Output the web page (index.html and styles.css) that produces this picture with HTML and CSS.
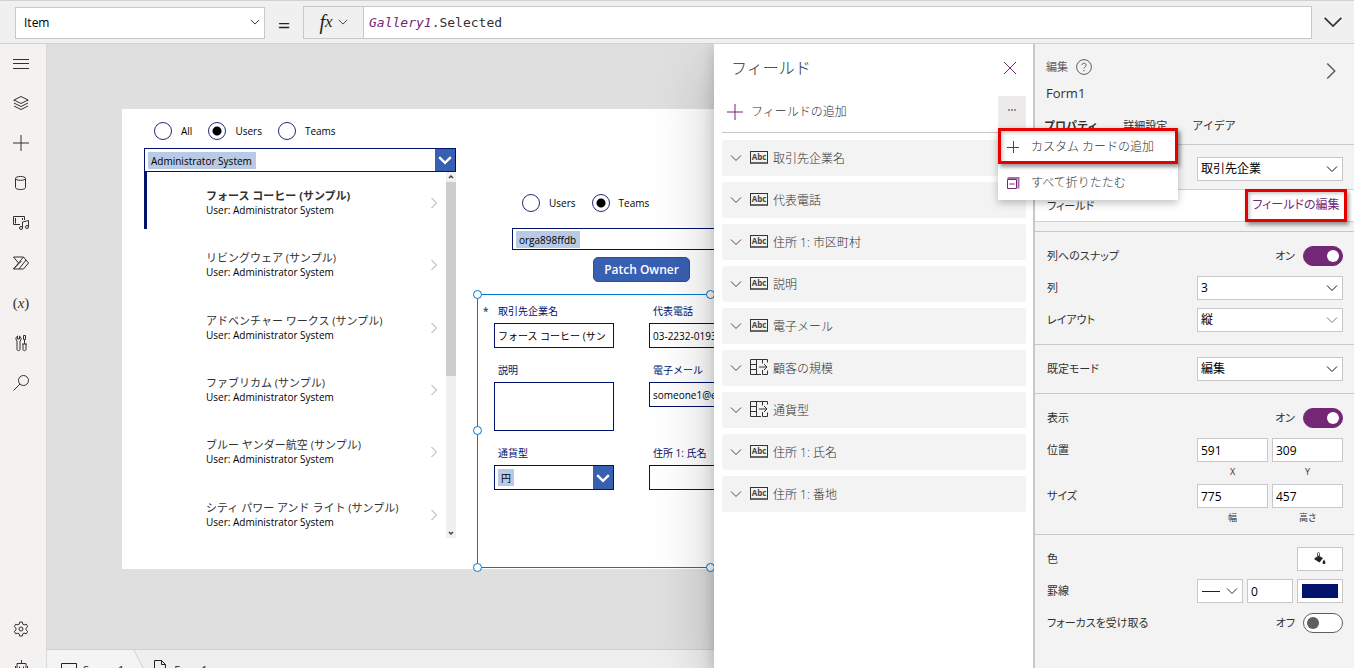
FILE: index.html
```html
<!DOCTYPE html>
<html lang="ja">
<head>
<meta charset="utf-8">
<title>Form1</title>
<link rel="stylesheet" href="styles.css">
</head>
<body>
<svg class="defs" aria-hidden="true">
  <symbol id="down" viewBox="0 0 12 12"><path d="M1 3.5 6 8.5 11 3.5"/></symbol>
  <symbol id="right" viewBox="0 0 12 12"><path d="M3.5 1 8.5 6 3.5 11"/></symbol>
  <symbol id="plus" viewBox="0 0 16 16"><path d="M8 0v16M0 8h16"/></symbol>
  <symbol id="lookup" viewBox="0 0 18 16"><path d="M11 15.500H.5V.5h17v3M6.500.5v15M.5 5.500h6M.5 10.500h6M12.500.5v4M12.500 11v4.500h5v-4M9 8h8M14 5l3 3-3 3"/></symbol>
</svg>

<header class="formula">
  <span class="pick pick-prop"><select aria-label="プロパティ名"><option>Item</option></select><svg class="ico s10"><use href="#down"/></svg></span>
  <span class="equals">=</span>
  <div class="fbox">
    <button class="fx" aria-label="fx"><i>f</i><em>x</em><svg class="ico s10"><use href="#down"/></svg></button>
    <code class="code"><span class="ident">Gallery1</span>.Selected</code>
  </div>
  <button class="expand" aria-label="展開"><svg class="ico" width="20" height="20"><use href="#down"/></svg></button>
</header>

<div class="main">
  <nav class="rail">
    <button aria-label="メニュー"><svg class="ico s16" viewBox="0 0 16 16"><path d="M0 3.500h16M0 7.500h16M0 12.500h16"/></svg></button>
    <button aria-label="ツリー ビュー"><svg class="ico s16" viewBox="0 0 16 16"><path d="M8 1.500 15 5 8 8.500 1 5zM1 8l7 3.500L15 8M1 11l7 3.500L15 11M1 5v1M15 5v1"/></svg></button>
    <button aria-label="挿入"><svg class="ico s16"><use href="#plus"/></svg></button>
    <button aria-label="データ"><svg class="ico s16" viewBox="0 0 16 16"><path d="M2.500 3.500v9c0 2.700 10 2.700 10 0v-9c0-2.700-10-2.700-10 0c0 2.400 10 2.400 10 0"/></svg></button>
    <button aria-label="メディア"><svg class="ico s16" viewBox="0 0 16 16"><path d="M7 9.500H.5v-8h11V5M2.500 3v5.500M9.500 3v2"/><path d="M9.500 13V7l6-1.500V12"/><circle cx="8" cy="13" r="1.500"/><circle cx="14" cy="12" r="1.500"/></svg></button>
    <button aria-label="Power Automate"><svg class="ico s16" viewBox="0 0 16 16"><path d="M.5 2h10l5 6-5 6H.5l5-6zM5.500 8l5-6M6 14l7-9M.5 14l8-8"/></svg></button>
    <button aria-label="変数"><span class="var">(<i>x</i>)</span></button>
    <button aria-label="ツール"><svg class="ico s16" viewBox="0 0 16 16"><path d="M4.500 1v3h2V1c2 1 2 4 .5 5v8.500c0 1.500-3 1.500-3 0V6C2.500 5 2.500 2 4.500 1zM10.500.5h2v4h-2zM11.500 4.500V9M9 9h5M10 9v5.500c0 1.500 3 1.500 3 0V9"/></svg></button>
    <button aria-label="検索"><svg class="ico s16" viewBox="0 0 16 16"><circle cx="10.500" cy="5.500" r="5"/><path d="M7 9 .5 15.500"/></svg></button>
    <div class="rail-end">
      <button aria-label="設定"><svg class="ico s16" viewBox="0 0 16 16"><circle cx="8" cy="8" r="2"/><path d="M6.700 1h2.600l.5 2.200 1.300.7 2.200-.7 1.400 2.400L13 7.200v1.600l1.700 1.600-1.400 2.400-2.200-.7-1.300.7-.5 2.200H6.700l-.5-2.200-1.300-.7-2.200.7-1.400-2.400L3 8.800V7.200L1.300 5.600l1.400-2.400 2.200.7 1.300-.7z"/></svg></button>
      <button aria-label="仮想エージェント"><svg class="ico s16" viewBox="0 0 16 16"><path d="M8.500-1v3.500M4 2.500h9v9H4zM2.500 5v4M14.500 5v4M6.500 5.500v1.500M10.500 5.500v1.500"/></svg></button>
    </div>
  </nav>

  <main class="work">
    <div class="stage">
      <div class="page">
        <div class="radios at-filter">
          <label><input type="radio" name="filter">All</label>
          <label><input type="radio" name="filter" checked>Users</label>
          <label><input type="radio" name="filter">Teams</label>
        </div>
        <div class="combo at-user"><span class="chip">Administrator System</span><button aria-label="開く"><svg class="ico s14"><use href="#down"/></svg></button></div>
        <div class="gallery">
          <ul class="items">
            <li class="on"><div><b>フォース コーヒー (サンプル)</b><span>User: Administrator System</span></div><button aria-label="選択"><svg class="ico s12"><use href="#right"/></svg></button></li>
            <li><div><b>リビングウェア (サンプル)</b><span>User: Administrator System</span></div><button aria-label="選択"><svg class="ico s12"><use href="#right"/></svg></button></li>
            <li><div><b>アドベンチャー ワークス (サンプル)</b><span>User: Administrator System</span></div><button aria-label="選択"><svg class="ico s12"><use href="#right"/></svg></button></li>
            <li><div><b>ファブリカム (サンプル)</b><span>User: Administrator System</span></div><button aria-label="選択"><svg class="ico s12"><use href="#right"/></svg></button></li>
            <li><div><b>ブルー ヤンダー航空 (サンプル)</b><span>User: Administrator System</span></div><button aria-label="選択"><svg class="ico s12"><use href="#right"/></svg></button></li>
            <li><div><b>シティ パワー アンド ライト (サンプル)</b><span>User: Administrator System</span></div><button aria-label="選択"><svg class="ico s12"><use href="#right"/></svg></button></li>
          </ul>
          <div class="scroll">
            <svg width="10" height="10" viewBox="0 0 10 10"><path d="M3 6l2-2 2 2" fill="none" stroke="#444" stroke-width="1.500"/></svg>
            <div class="thumb"></div>
            <svg width="10" height="10" viewBox="0 0 10 10"><path d="M3 4l2 2 2-2" fill="none" stroke="#444" stroke-width="1.500"/></svg>
          </div>
        </div>

        <div class="radios at-owner">
          <label><input type="radio" name="owner">Users</label>
          <label><input type="radio" name="owner" checked>Teams</label>
        </div>
        <div class="combo at-team"><span class="chip">orga898ffdb</span></div>
        <button class="patch">Patch Owner</button>

        <form class="form">
          <div class="card req"><label for="c1">取引先企業名</label><input id="c1" value="フォース コーヒー (サン"></div>
          <div class="card"><label for="c2">代表電話</label><input id="c2" value="03-2232-0193"></div>
          <div class="card third"></div>
          <div class="card"><label for="c3">説明</label><textarea id="c3"></textarea></div>
          <div class="card"><label for="c4">電子メール</label><input id="c4" value="someone1@example.com"></div>
          <div class="card third"></div>
          <div class="card"><label for="c6">通貨型</label><div class="combo"><span class="chip">円</span><button id="c6" type="button"><svg class="ico s14"><use href="#down"/></svg></button></div></div>
          <div class="card"><label for="c5">住所 1: 氏名</label><input id="c5"></div>
          <i class="grip nw"></i><i class="grip n"></i><i class="grip w"></i><i class="grip sw"></i><i class="grip s"></i>
        </form>
      </div>
    </div>
    <div class="crumbs">
      <a href="#" class="crumb"><svg class="ico s16" viewBox="0 0 16 16"><path d="M.5 3.500h15v10H.5z"/></svg>Screen1</a>
      <svg class="slash" viewBox="0 0 20 36"><path d="M0 0h2l18 36H0z" fill="#f4f4f4"/><path d="M2 0l18 36" stroke="#d0d0d0" fill="none"/></svg>
      <a href="#" class="crumb last"><svg class="ico s16" viewBox="0 0 16 16"><path d="M2.500.5h7l4 4v11h-11zM9.500.5v4h4"/></svg>Form1</a>
    </div>
  </main>

  <aside class="fields">
    <div class="fields-head"><h2>フィールド</h2><button aria-label="閉じる"><svg class="ico s12" viewBox="0 0 12 12"><path d="M0 0l12 12M12 0 0 12"/></svg></button></div>
    <div class="fields-tools">
      <button class="add"><svg class="ico s16"><use href="#plus"/></svg>フィールドの追加</button>
      <div class="more">
        <button class="dots" aria-label="その他"><svg width="8" height="2" viewBox="0 0 8 2"><path d="M0 0h2v2H0zM3 0h2v2H3zM6 0h2v2H6z" fill="#a58aa5"/></svg></button>
        <div class="menu">
          <button class="marked"><svg class="ico s12" viewBox="0 0 12 12"><path d="M6.500 0v12M0 6.500h12"/></svg>カスタム カードの追加</button>
          <button><svg class="ico s12" viewBox="0 0 12 12"><path d="M.5 2.500h9v9h-9z"/><path d="M.5 1h11v10.500" stroke="#a56fa5" stroke-width="2"/><path d="M2.500 7h5"/></svg>すべて折りたたむ</button>
        </div>
      </div>
    </div>
    <ul class="list">
      <li><svg class="ico s12"><use href="#down"/></svg><span class="abc">Abc</span>取引先企業名</li>
      <li><svg class="ico s12"><use href="#down"/></svg><span class="abc">Abc</span>代表電話</li>
      <li><svg class="ico s12"><use href="#down"/></svg><span class="abc">Abc</span>住所 1: 市区町村</li>
      <li><svg class="ico s12"><use href="#down"/></svg><span class="abc">Abc</span>説明</li>
      <li><svg class="ico s12"><use href="#down"/></svg><span class="abc">Abc</span>電子メール</li>
      <li><svg class="ico s12"><use href="#down"/></svg><svg class="lookup"><use href="#lookup"/></svg>顧客の規模</li>
      <li><svg class="ico s12"><use href="#down"/></svg><svg class="lookup"><use href="#lookup"/></svg>通貨型</li>
      <li><svg class="ico s12"><use href="#down"/></svg><span class="abc">Abc</span>住所 1: 氏名</li>
      <li><svg class="ico s12"><use href="#down"/></svg><span class="abc">Abc</span>住所 1: 番地</li>
    </ul>
  </aside>

  <aside class="props">
    <div class="props-head">
      <div class="kind">編集<svg class="ico s16" viewBox="0 0 16 16"><circle cx="8" cy="8" r="7.400"/><path d="M5.900 6.200c0-2.700 4.200-2.700 4.200 0 0 1.700-2.100 1.600-2.100 3.300M8 11v1.300"/></svg></div>
      <button class="collapse" aria-label="折りたたむ"><svg class="ico" width="18" height="18"><use href="#right"/></svg></button>
      <h3>Form1</h3>
    </div>
    <div class="tabs"><button class="active">プロパティ</button><button>詳細設定</button><button>アイデア</button></div>

    <section>
      <div class="row"><span></span><span class="pick wide"><select aria-label="データ ソース"><option>取引先企業</option></select><svg class="ico s12"><use href="#down"/></svg></span></div>
      <div class="row lit"><span>フィールド</span><a href="#" class="edit">フィールドの編集</a></div>
    </section>
    <section>
      <div class="row"><label for="snap">列へのスナップ</label><span class="state">オン</span><input id="snap" type="checkbox" class="toggle" checked></div>
      <div class="row"><label for="cols">列</label><span class="pick wide"><select id="cols"><option>3</option></select><svg class="ico s12"><use href="#down"/></svg></span></div>
      <div class="row"><label for="lay">レイアウト</label><span class="pick wide soft"><select id="lay"><option>縦</option></select><svg class="ico s12"><use href="#down"/></svg></span></div>
    </section>
    <section>
      <div class="row"><label for="mode">既定モード</label><span class="pick wide"><select id="mode"><option>編集</option></select><svg class="ico s12"><use href="#down"/></svg></span></div>
    </section>
    <section>
      <div class="row"><label for="vis">表示</label><span class="state">オン</span><input id="vis" type="checkbox" class="toggle" checked></div>
      <div class="row"><span>位置</span><div class="pair"><input id="px" value="591"><input id="py" value="309"></div></div>
      <div class="caps"><label for="px">X</label><label for="py">Y</label></div>
      <div class="row"><span>サイズ</span><div class="pair"><input id="sw" value="775"><input id="sh" value="457"></div></div>
      <div class="caps"><label for="sw">幅</label><label for="sh">高さ</label></div>
    </section>
    <section class="end">
      <div class="row"><span>色</span><button class="tile" aria-label="塗りつぶしの色"><svg width="14" height="14" viewBox="0 0 14 14"><path d="M1 7l4-3.500 5 2.500-3.500 4.500z" fill="#222"/><path d="M4.500 6V1.500c0-1.300 2-1.300 2 0V5" fill="none" stroke="#555"/><path d="M11 7.500c2 3 2 4.500 0 4.500s-2-1.500 0-4.500z" fill="#222"/></svg></button></div>
      <div class="row"><span>罫線</span><div class="trio"><button class="tile line" aria-label="線の種類"><i></i><svg class="ico s12"><use href="#down"/></svg></button><input aria-label="罫線の太さ" value="0"><button class="tile" aria-label="罫線の色"><i class="navy"></i></button></div></div>
      <div class="row"><label for="foc">フォーカスを受け取る</label><span class="state">オフ</span><input id="foc" type="checkbox" class="toggle"></div>
    </section>
  </aside>
</div>
</body>
</html>
```
FILE: styles.css
```css
* { box-sizing: border-box; }
body {
  margin: 0;
  height: 100vh;
  display: flex;
  flex-direction: column;
  overflow: hidden;
  font: 12px/16px "Open Sans", "Noto Sans CJK JP", sans-serif;
  color: #323130;
}
button, input, select, textarea { font: inherit; color: inherit; margin: 0; border-radius: 0; }
button { background: none; border: 0; padding: 0; display: flex; align-items: center; justify-content: center; }
input, textarea { min-width: 0; }
ul { list-style: none; margin: 0; padding: 0; }
h2, h3 { margin: 0; font-weight: 400; }
a { text-decoration: none; color: inherit; }
.defs { position: absolute; width: 0; height: 0; }
.ico { fill: none; stroke: currentColor; stroke-width: 1; flex: none; overflow: visible; }
.s10 { width: 10px; height: 10px; }
.s12 { width: 12px; height: 12px; }
.s14 { width: 14px; height: 14px; }
.s16 { width: 16px; height: 16px; }

/* formula bar */
.formula {
  position: relative;
  flex: none;
  height: 44px;
  display: flex;
  align-items: center;
  padding-left: 15px;
  background: #f0f0f0;
  border-top: 1px solid #d2d2d2;
  border-bottom: 1px solid #d2d0ce;
  z-index: 2;
}
.pick { position: relative; display: flex; }
.pick select {
  appearance: none;
  width: 100%;
  padding: 0 20px 0 3px;
  background: #fff;
  border: 1px solid #c8c8c8;
  color: #000;
}
.pick .ico { position: absolute; right: 5px; top: 50%; margin-top: -6px; pointer-events: none; color: #111; }
.pick-prop { width: 250px; height: 32px; margin-top: 2px; }
.pick-prop select { padding-left: 8px; font-size: 12px; }
.equals { width: 38px; padding-top: 4px; text-align: center; font-size: 22px; font-weight: 500; color: #222; }
.fbox { flex: 1; display: flex; height: 33px; border: 1px solid #c8c8c8; background: #fff; }
.fx { width: 60px; background: #f0f0f0; border-right: 1px solid #c8c8c8; font: italic 20px/24px "Liberation Serif", serif; color: #222; }
.fx em { font-size: 17px; margin-right: 5px; }
.code { padding: 7px 5px; font: 13px/17px "DejaVu Sans Mono", monospace; color: #323130; }
.ident { color: #742774; font-style: italic; }
.expand { width: 42px; }

.main { flex: 1; min-height: 0; display: grid; grid-template-columns: 47px minmax(0, 1fr) 319px 321px; }

/* left rail */
.rail { display: flex; flex-direction: column; background: #f3f2f1; border-right: 1px solid #d8d8d8; overflow: hidden; padding-right: 4px; }
.rail button { width: 100%; height: 40px; flex: none; }
.rail > button:first-child { height: 39px; }
.rail-end { margin-top: auto; margin-bottom: -21px; }
.var { font: 15px/16px "Liberation Serif", serif; }

/* canvas */
.work { display: flex; flex-direction: column; overflow: hidden; background: #dfdfdf; }
.stage { flex: 1; min-height: 0; display: flex; padding: 65px 0 80px 75px; }
.page { position: relative; flex: 1; background: #fff; font-size: 10px; color: #000; }
.radios { position: absolute; display: flex; gap: 16px; }
.radios label { display: flex; align-items: center; gap: 9px; height: 19px; font-weight: 500; }
.radios input { appearance: none; width: 18px; height: 18px; border: 1px solid #1f2a7c; border-radius: 50%; background: #fff; }
.radios input:checked { background: radial-gradient(circle, #000 4px, #fff 5px); }
.at-filter { left: 32px; top: 12px; }
.at-owner { left: 400px; top: 84px; }
.combo { display: flex; height: 24px; border: 1px solid #00126b; background: #fff; align-items: center; padding-left: 3px; }
.combo .chip { background: #b8cae6; padding: 1px 3px 0; }
.at-user .chip, .at-team .chip { font-weight: 500; padding-right: 4px; }
.combo button { margin-left: auto; width: 20px; height: 100%; background: #3860b2; color: #fff; }
.combo .ico { stroke-width: 2; }
.at-user { position: absolute; left: 22px; top: 39px; width: 312px; }
.at-team { position: absolute; left: 390px; top: 119px; width: 325px; height: 22px; }
.gallery { position: absolute; left: 22px; top: 63px; width: 312px; height: 366px; display: flex; overflow: hidden; }
.items { flex: 1; height: 374px; display: grid; grid-auto-rows: 1fr; }
.items li { display: flex; align-items: flex-start; padding: 16px 6px 0 62px; }
.items li > div { flex: 1; display: flex; flex-direction: column; }
.items b { font-size: 11px; font-weight: 400; line-height: 16px; color: #323130; }
.items span { font-weight: 400; line-height: 13px; }
.items .on b { font-weight: 700; }
.items .on span { font-weight: 500; }
.items .on { position: relative; }
.items .on::before { content: ""; position: absolute; left: 0; top: 0; width: 3px; height: 57px; background: #00126b; }
.items button { height: 30px; color: #a0a0a0; }
.scroll { width: 10px; background: #f0f0f0; display: flex; flex-direction: column; }
.thumb { height: 194px; background: #cdcdcd; margin-bottom: auto; }
.patch { position: absolute; left: 471px; top: 148px; width: 97px; height: 25px; border-radius: 5px; border: 1px solid #2d4f96; background: #3860b2; color: #fff; font-size: 12px; font-weight: 600; }
.form {
  position: absolute;
  left: 355px;
  top: 185px;
  width: 467px;
  height: 274px;
  border: 1px solid #0078d4;
  padding: 8px 0 0 16px;
  display: grid;
  grid-template-columns: repeat(3, 155px);
  gap: 14px 0;
  align-content: start;
}
.card { position: relative; display: flex; flex-direction: column; gap: 4px; padding-right: 35px; }
.card label { padding-left: 4px; color: #00126b; }
.card input, .card textarea { width: 100%; height: 25px; border: 1px solid #00126b; background: #fff; padding: 0 3px; resize: none; }
.card textarea { height: 49px; }
.card .combo { height: 25px; }
.req::before { content: "*"; position: absolute; left: -11px; top: 0; color: #00126b; }
.grip { position: absolute; width: 9px; height: 9px; border: 1px solid #0078d4; border-radius: 50%; background: #fff; }
.nw, .n { top: -5px; }
.sw, .s { bottom: -5px; }
.nw, .w, .sw { left: -5px; }
.n, .s { left: calc(50% - 5px); }
.w { top: calc(50% - 5px); }
.crumbs { flex: none; height: 19px; display: flex; align-items: flex-start; background: #efefef; border-top: 1px solid #d0d0d0; overflow: hidden; }
.crumb { display: flex; align-items: center; gap: 6px; height: 40px; padding: 0 8px 0 14px; background: #f4f4f4; font-size: 11px; color: #222; }
.last { background: none; padding-left: 0; }
.crumb .ico { margin-bottom: 4px; }
.slash { width: 20px; height: 36px; flex: none; overflow: visible; }

/* fields pane */
.fields { position: relative; background: #fff; padding: 0 8px; box-shadow: 0 26px 58px rgba(0, 0, 0, .22), 0 5px 14px rgba(0, 0, 0, .18); font-weight: 300; }
.fields-head { display: flex; align-items: center; height: 52px; padding: 0 9px 4px 9px; }
.fields-head h2 { flex: 1; font-size: 16px; line-height: 22px; font-weight: 300; }
.fields button { color: #742774; }
.fields-tools { display: flex; height: 37px; border-bottom: 1px solid #c8c6c4; margin: 0 -1px 7px 0; }
.add { flex: 1; justify-content: flex-start; gap: 8px; padding: 0 0 4px 5px; }
.fields .add, .fields .menu button { color: #323130; }
.add .ico, .menu .ico { stroke: #742774; }
.more { position: relative; }
.dots { width: 28px; height: 36px; padding-bottom: 8px; background: #edebe9; border-radius: 2px; }
.menu { position: absolute; left: 0; top: 32px; width: 180px; background: #fff; box-shadow: 0 3px 8px rgba(0, 0, 0, .25); z-index: 3; }
.menu button { width: 100%; height: 36px; justify-content: flex-start; gap: 12px; padding: 1px 0 0 9px; }
.marked, .edit { outline: 3px solid #e60000; outline-offset: -3px; box-shadow: 2px 3px 4px rgba(0, 0, 0, .4), inset 5px 5px 4px -1px rgba(0, 0, 0, .3); }
.list { display: grid; gap: 6px; margin-right: -1px; }
.list li { display: flex; align-items: center; height: 36px; padding: 1px 0 0 8px; background: #f3f3f3; border-radius: 3px; }
.list .s12 { color: #742774; margin-bottom: 2px; }
.abc, .lookup { flex: none; width: 18px; margin: 0 5px 3px 8px; }
.abc { height: 13px; border: 1px solid #333; border-bottom: 2px solid #666; font-size: 8px; line-height: 10px; font-weight: 700; text-align: center; color: #444; }
.lookup { height: 16px; fill: none; stroke: #333; }

/* property pane */
.props { position: relative; background: #f3f3f3; border-left: 2px solid #c8c8c8; overflow: hidden; font-feature-settings: "palt"; }
.props-head { display: grid; grid-template-columns: 1fr auto; align-items: center; padding: 11px 14px 0 11px; }
.kind { display: flex; align-items: center; gap: 8px; height: 24px; font-size: 11px; color: #605e5c; }
.collapse { color: #605e5c; height: 32px; grid-row: 1 / 3; grid-column: 2; align-self: start; }
h3 { font-size: 13px; line-height: 28px; }
.tabs { display: flex; gap: 25px; padding: 11px 0 0 9px; height: 38px; align-items: flex-start; border-bottom: 1px solid #c8c8c8; }
.tabs button { font-size: 11px; height: 16px; font-feature-settings: normal; }
.tabs .active { font-weight: 700; }
.props section { padding: 8px 0; border-bottom: 1px solid #c8c8c8; }
.props .end { border: 0; }
.row { display: flex; align-items: center; height: 32px; padding: 0 11px 0 12px; }
.row > :first-child { flex: 1; font-size: 11px; }
.lit { margin: 4px 0 1px; height: 33px; background: #fff; border: solid #d0d0d0; border-width: 1px 0; padding-right: 7px; }
.edit { width: 102px; height: 33px; padding: 8px 0; text-align: center; color: #742774; }
.wide { width: 146px; height: 24px; }
.soft .ico { color: #777; }
.state { margin-right: 8px; font-size: 11px; }
.toggle { appearance: none; width: 40px; height: 20px; border-radius: 10px; border: 1px solid #605e5c; background: #fff; display: flex; align-items: center; padding: 0 3px; }
.toggle::before { content: ""; width: 12px; height: 12px; border-radius: 50%; background: #605e5c; }
.toggle:checked { background: #742774; border-color: #742774; justify-content: flex-end; }
.toggle:checked::before { background: #fff; }
.pair, .caps { display: grid; grid-template-columns: 71px 71px; gap: 4px; }
.row input:not(.toggle) { width: 100%; height: 24px; border: 1px solid #c8c8c8; background: #fff; padding: 0 3px; color: #000; }
.caps { justify-content: end; padding-right: 11px; height: 14px; font-size: 9px; line-height: 12px; text-align: center; }
.trio { display: grid; grid-template-columns: repeat(3, 46px); gap: 4px; }
.row .tile { flex: none; width: 46px; height: 24px; border: 1px solid #c8c8c8; background: #fff; gap: 6px; }
.line i { width: 18px; height: 1px; background: #222; }
.navy { width: 36px; height: 14px; background: #00126b; }
```
